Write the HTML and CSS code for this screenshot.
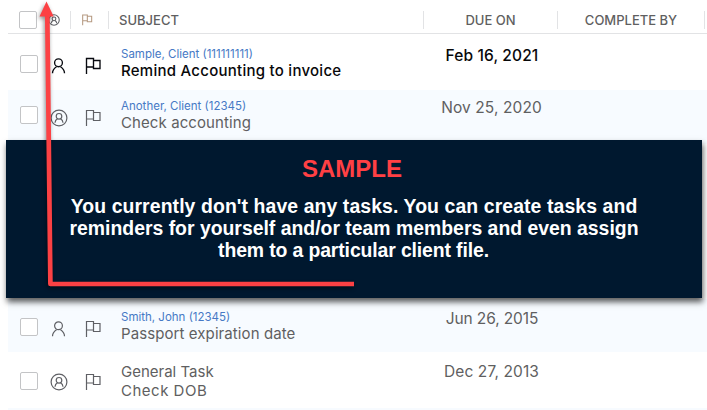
FILE: index.html
```html
<!DOCTYPE html>
<html lang="en">
<head>
<meta charset="utf-8">
<title>Tasks</title>
<link rel="stylesheet" href="styles.css">
</head>
<body>
<svg class="defs" aria-hidden="true">
  <symbol id="user" viewBox="0 0 18 18"><circle cx="8.500" cy="5.800" r="3.900"/><path d="M2.500 16.200c0-3.100 1.700-5 4-6.500M14.500 16.200c0-3.100-1.700-5-4-6.500"/></symbol>
  <symbol id="user-ring" viewBox="0 0 18 18"><circle cx="9" cy="9" r="7.9"/><circle cx="9" cy="7.3" r="2.8"/><path d="M5 13.8c.1-2 1-3.3 2.5-4.1M13 13.8c-.1-2-1-3.3-2.5-4.1"/></symbol>
  <symbol id="flag" viewBox="0 0 18 18"><path d="M2.500 17V1.500h7v8.500H2.500M9.500 3.500h6.500v8H9.500V9.500"/></symbol>
</svg>
<main class="tasks">
  <header class="row head">
    <div class="cell"><span class="check"></span></div>
    <div class="cell"><svg class="icon"><use href="#user-ring"/></svg></div>
    <div class="cell"><svg class="icon flag"><use href="#flag"/></svg></div>
    <div class="cell subject">SUBJECT</div>
    <div class="cell date">DUE ON</div>
    <div class="cell date">COMPLETE BY</div>
  </header>
  <section class="row unread">
    <span class="check"></span><svg class="icon"><use href="#user"/></svg><svg class="icon flag"><use href="#flag"/></svg>
    <div class="subject"><a class="client">Sample, Client (111111111)</a><span class="title t1">Remind Accounting to invoice</span></div>
    <div class="date"><span class="d1">Feb 16, 2021</span></div>
  </section>
  <section class="row tinted second">
    <span class="check"></span><svg class="icon"><use href="#user-ring"/></svg><svg class="icon flag"><use href="#flag"/></svg>
    <div class="subject"><a class="client">Another, Client (12345)</a><span class="title t2">Check accounting</span></div>
    <div class="date"><span class="d2">Nov 25, 2020</span></div>
  </section>
  <div class="covered"></div>
  <section class="row tinted fourth">
    <span class="check"></span><svg class="icon"><use href="#user"/></svg><svg class="icon flag"><use href="#flag"/></svg>
    <div class="subject"><a class="client">Smith, John (12345)</a><span class="title t3">Passport expiration date</span></div>
    <div class="date"><span class="d3">Jun 26, 2015</span></div>
  </section>
  <section class="row fifth">
    <span class="check"></span><svg class="icon"><use href="#user-ring"/></svg><svg class="icon flag"><use href="#flag"/></svg>
    <div class="subject"><span class="title">General Task</span><span class="title t5">Check DOB</span></div>
    <div class="date"><span class="d4">Dec 27, 2013</span></div>
  </section>
  <div class="next"></div>
</main>
<aside class="notice">
  <h1>SAMPLE</h1>
  <p><span class="n1">You currently don't have any tasks. You can create tasks and</span><br><span class="n2">reminders for yourself and/or team members and even assign</span><br><span class="n3">them to a particular client file.</span></p>
</aside>
<svg class="arrow" viewBox="0 0 360 300" aria-hidden="true">
  <path class="line" d="M47.300 14L50.400 284H354"/>
  <path class="tip" d="M46.500 1.500L53.700 16.500H39.500Z"/>
</svg>
</body>
</html>
```
FILE: styles.css
```css
* { box-sizing: border-box; }
body {
  margin: 0;
  width: 707px;
  height: 410px;
  overflow: hidden;
  position: relative;
  background: #fff;
  color: #5f5f61;
  font-family: Inter, "Liberation Sans", sans-serif;
}
.defs { display: none; }
.tasks { margin-left: 8px; }
.row {
  display: grid;
  grid-template-columns: 35px 28px 38px 315px 134px 147px 1fr;
  height: 56px;
  padding-top: 12px;
}
.head {
  height: 34px;
  padding-top: 11px;
  border-bottom: 1px solid #e2e3e5;
  font-size: 13px;
  font-weight: 500;
}
.cell { height: 18px; border-right: 1px solid #e2e3e5; line-height: 18px; }
.cell:first-child { border-right: 0; }
.tinted { background: #f7fbff; }
.second { height: 54px; padding-top: 8px; }
.covered { height: 155px; }
.fourth { height: 53px; padding-top: 10px; }
.fifth { height: 56px; padding-top: 10px; }
.next { height: 4px; background: #f7fbff; }
.check {
  display: block;
  width: 18px;
  height: 18px;
  margin: 9px 0 0 12px;
  border: 1px solid #c3c4c6;
  border-radius: 2px;
  background: #fff;
}
.head .check { margin: 0 0 0 11px; }
.second .check { margin-top: 8px; }
.fifth .check { margin-top: 10px; }
.icon {
  display: block;
  width: 18px;
  height: 18px;
  margin: 11px 0 0 7px;
  fill: none;
  stroke: #5f6065;
  stroke-width: 1.200;
}
.flag { margin-left: 13px; }
.unread .icon { stroke: #080a10; stroke-width: 1.350; }
.head .icon { width: 12px; height: 12px; margin: 3px 0 0 5px; stroke-width: 1.6; }
.head .flag { margin-left: 10px; stroke: #b69a82; }
.subject { padding-left: 12px; white-space: nowrap; }
.head .subject { padding-left: 10px; }
.client, .title { display: block; width: max-content; }
.client { color: #4679c5; font-size: 11.500px; line-height: 16px; }
.title { font-size: 15px; line-height: 18px; }
.fifth .title { line-height: 19px; }
.date { text-align: center; font-size: 15.500px; line-height: 20px; white-space: nowrap; }
.head .date { font-size: 13px; line-height: 18px; }
.unread .title, .unread .date { color: #08080a; font-weight: 500; }
.t1 { letter-spacing: .260px; }
.t2, .t3 { letter-spacing: .090px; }
.t5 { letter-spacing: .500px; }
.d1 { letter-spacing: .130px; padding-left: 2px; }
.d2 { letter-spacing: .100px; padding-left: 1px; }
.d3 { letter-spacing: -.100px; padding-left: 2px; }
.d4 { letter-spacing: .120px; padding-left: 1px; }
.notice {
  position: absolute;
  left: 6px;
  top: 140px;
  width: 696px;
  height: 158px;
  padding-top: 15px;
  background: #00182f;
  box-shadow: 1px 4px 6px rgba(0, 0, 0, .65);
  color: #fff;
  text-align: center;
  font-family: "Liberation Sans", sans-serif;
}
.notice h1 { margin: 0 0 12px; padding-right: 4px; color: #ff4044; font-size: 24px; line-height: 28px; }
.notice p { margin: 0; font-size: 19.400px; line-height: 22px; font-weight: 700; white-space: nowrap; }
.n1 { letter-spacing: .100px; }
.n3 { letter-spacing: -.120px; padding-right: 1px; }
.arrow {
  position: absolute;
  left: 0;
  top: 0;
  width: 360px;
  height: 300px;
  filter: drop-shadow(-1px 2px 2px rgba(0, 0, 0, .45));
}
.line { fill: none; stroke: #fc4144; stroke-width: 4.700; stroke-linejoin: round; }
.tip { fill: #fc4144; }
```
